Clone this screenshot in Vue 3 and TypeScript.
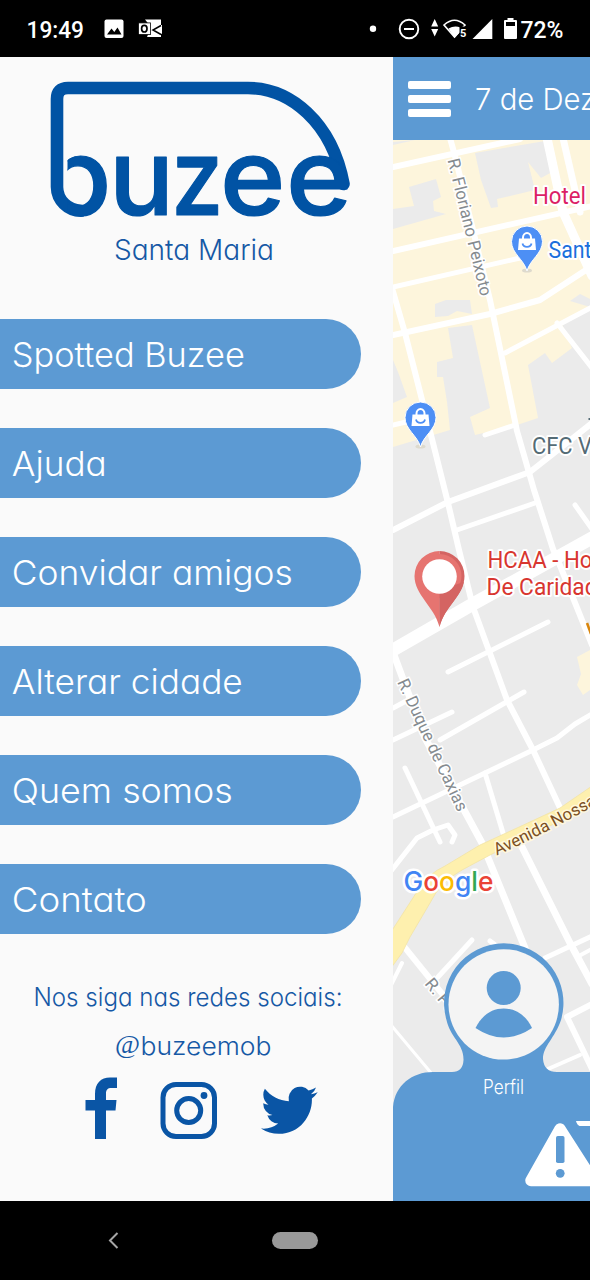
<script setup lang="ts">
interface MenuItem {
  label: string
  width: number
}

interface MapLabel {
  text: string
  x: number
  y: number
  width: number
  color: string
}

interface Road {
  points: string
  width: number
}

const menu: MenuItem[] = [
  { label: 'Spotted Buzee', width: 233 },
  { label: 'Ajuda', width: 95 },
  { label: 'Convidar amigos', width: 281 },
  { label: 'Alterar cidade', width: 231 },
  { label: 'Quem somos', width: 221 },
  { label: 'Contato', width: 135 },
]

const wordmark = [
  { letter: 'b', x: 42, stretch: 1.05 },
  { letter: 'u', x: 109, stretch: 1.01 },
  { letter: 'z', x: 171.3, stretch: 0.87 },
  { letter: 'e', x: 220, stretch: 1.04 },
  { letter: 'e', x: 286, stretch: 1.05 },
]

const blocks: string[] = [
  '393,140 590,140 590,309 562,324 572,348 552,363 545,353 528,365 538,418 517,425 475,435 470,417 490,408 472,325 448,328 453,358 437,362 437,377 443,377 447,402 450,430 393,447',
  '577,657 590,650 590,690 583,695 577,685 581,674',
]

const yards: string[] = [
  '475,153 545,141 552,172 541,178 528,162 535,190 497,199 498,207 491,208 481,180',
  '409,187 436,179 441,197 433,201 434,211 446,214 393,229 393,209 414,206',
  '435,304 446,300 470,300 472,314 457,311 448,316 435,317',
  '393,360 398,372 407,397 393,403',
  '393,142 415,140 393,145',
  '570,301 580,294 590,299 590,307',
]

const roads: Road[] = [
  { points: '393,167 520,139', width: 6 },
  { points: '450,138 455,156 490,300 517,431 534,490 553,549 561,568 592,645', width: 6 },
  { points: '547,138 563,212 592,276', width: 9 },
  { points: '563,138 580,212', width: 7 },
  { points: '393,251 592,206', width: 6 },
  { points: '393,287 520,258', width: 5 },
  { points: '392,288 405,333 433,443 448,503 459,550 473,607 507,700 533,750 562,812', width: 6 },
  { points: '393,335 490,314 540,300 592,266', width: 6 },
  { points: '505,353 592,307', width: 5 },
  { points: '557,323 592,368', width: 5 },
  { points: '485,435 515,425', width: 5 },
  { points: '393,530 448,502 530,472 592,423', width: 6 },
  { points: '457,530 535,503', width: 5 },
  { points: '393,425 410,421', width: 5 },
  { points: '575,505 592,529', width: 5 },
  { points: '388,653 473,604 592,538', width: 13 },
  { points: '448,672 548,622', width: 5 },
  { points: '440,740 524,692', width: 5 },
  { points: '393,740 452,712', width: 5 },
  { points: '393,708 408,700', width: 5 },
  { points: '394,655 425,738 482,843 525,948', width: 7 },
  { points: '393,817 485,773 533,750 557,738 575,724 592,714', width: 5 },
  { points: '405,768 440,842', width: 5 },
  { points: '391,871 417,838 433,830 448,825 455,835 452,842', width: 5 },
  { points: '485,773 503,833', width: 5 },
  { points: '522,847 570,943 592,984', width: 7 },
  { points: '545,958 592,936', width: 5 },
  { points: '577,957 592,949', width: 4 },
  { points: '472,940 438,977', width: 5 },
  { points: '402,944 452,1006', width: 6 },
  { points: '391,1025 432,1074', width: 3 },
  { points: '391,985 402,963', width: 4 },
  { points: '592,1004 567,1017 592,1069', width: 6 },
  { points: '548,1069 580,1055', width: 4 },
  { points: '490,941 502,950', width: 5 },
]

const places: MapLabel[] = [
  { text: 'Hotel', x: 533, y: 203.5, width: 53, color: '#dc1f66' },
  { text: 'Sant', x: 548.5, y: 258, width: 43, color: '#1b6fdc' },
  { text: 'CFC V', x: 532, y: 453.5, width: 60, color: '#546b75' },
  { text: 'HCAA - Ho', x: 487.5, y: 568, width: 105, color: '#d8362f' },
  { text: 'De Caridad', x: 486.5, y: 595, width: 111, color: '#d8362f' },
]

const shops = [
  { x: 527, y: 241.5 },
  { x: 420.5, y: 417.5 },
]

const google = [
  { letter: 'G', color: '#4285f4' },
  { letter: 'o', color: '#ea4335' },
  { letter: 'o', color: '#fbbc05' },
  { letter: 'g', color: '#4285f4' },
  { letter: 'l', color: '#34a853' },
  { letter: 'e', color: '#ea4335' },
]
</script>

<template>
  <div class="phone">
    <header class="status">
      <svg width="590" height="57" viewBox="0 0 590 57">
        <text class="status-text" x="26.5" y="37.5" textLength="57.5" lengthAdjust="spacingAndGlyphs">19:49</text>
        <rect x="104.5" y="19.5" width="19" height="18.5" rx="2" fill="#fff" />
        <path d="M107 34.5 L111.5 28.5 L114.3 32 L117.5 27.5 L121.5 34.5 Z" fill="#000" />
        <path d="M145 19.5 H161 V29 L151 27 Z M147 37 H161 V31 L150 30 Z" fill="#fff" />
        <path d="M150 26 L162 25 V34 L150 30 Z" fill="#fff" />
        <path d="M161 25.5 L153 30 L161 34.5" fill="none" stroke="#000" stroke-width="1.5" />
        <rect x="138.4" y="22.9" width="12" height="11.7" fill="#fff" stroke="#000" stroke-width="0.8" />
        <ellipse cx="144.3" cy="28.7" rx="2.7" ry="3.3" fill="none" stroke="#000" stroke-width="1.7" />
        <circle cx="373" cy="28.8" r="3.2" fill="#fff" />
        <circle cx="409" cy="29" r="9.3" fill="none" stroke="#fff" stroke-width="1.9" />
        <path d="M404 29 H414" stroke="#fff" stroke-width="2" />
        <path d="M431.2 26.5 L434.7 19 L438.2 26.5 Z M431.2 29 L434.7 36.5 L438.2 29 Z" fill="#fff" />
        <path d="M444 25 Q454.5 15.5 465 25 L454.5 37 Z" fill="none" stroke="#fff" stroke-width="1.6" />
        <path d="M448.5 28.5 Q454.5 25 460.5 27.5 V31.5 L454.5 38 Z" fill="#fff" />
        <rect x="459.5" y="26.5" width="8" height="11.5" fill="#000" />
        <text class="wifi-band" x="460" y="36.5">5</text>
        <path d="M472.5 39 L492.3 19 V39 Z" fill="#fff" />
        <path d="M507.5 18 H513.5 V20 H516 Q517 20 517 21 V38 Q517 39 516 39 H505 Q504 39 504 38 V21 Q504 20 505 20 H507.5 Z" fill="#fff" />
        <rect x="506" y="22" width="9" height="4" fill="#000" />
        <text class="status-text" x="520.5" y="37.5" textLength="43" lengthAdjust="spacingAndGlyphs">72%</text>
      </svg>
    </header>

    <div class="screen">
      <aside class="drawer">
        <svg class="brand" width="393" height="262" viewBox="0 57 393 262">
          <defs>
            <clipPath id="wordmark-edge">
              <path d="M67.5 150 H352 V220 H81 A30.3 30.3 0 0 1 67.5 214 Z" />
            </clipPath>
          </defs>
          <path
            d="M81 210.7 A24 24 0 0 1 57 187 V99 Q57 88 68 88 H248 C290 88 332 122 343.5 184"
            fill="none"
            stroke="#0153a4"
            stroke-width="12.6"
            stroke-linecap="round"
          />
          <g clip-path="url(#wordmark-edge)">
            <text
              v-for="glyph in wordmark"
              :key="glyph.x"
              class="wordmark"
              :transform="`translate(${glyph.x} 215) scale(${glyph.stretch} 1)`"
            >{{ glyph.letter }}</text>
          </g>
          <text class="thin city" x="114" y="260" textLength="160" lengthAdjust="spacingAndGlyphs">Santa Maria</text>
        </svg>

        <nav class="menu">
          <a v-for="item in menu" :key="item.label" class="item">
            <svg width="330" height="70" viewBox="0 0 330 70">
              <text class="thin item-text" x="11.8" y="48.2" :textLength="item.width" lengthAdjust="spacingAndGlyphs">{{ item.label }}</text>
            </svg>
          </a>
        </nav>

        <svg class="social" width="393" height="267" viewBox="0 934 393 267">
          <text class="thin follow" x="33.5" y="1006" textLength="309" lengthAdjust="spacingAndGlyphs">Nos siga nas redes sociais:</text>
          <text class="at" x="115" y="1053" textLength="25" lengthAdjust="spacingAndGlyphs">@</text>
          <text class="thin follow" x="140.5" y="1054.5" textLength="131" lengthAdjust="spacingAndGlyphs">buzeemob</text>
          <path
            d="M95 1139 V1110.5 H85.5 V1100 H95 V1094 C95 1083 101 1077.5 110 1077.5 H117 V1088 H111.5 C107.5 1088 106 1090 106 1093.5 V1100 H116.5 L115.5 1110.5 H106 V1139 Z"
            fill="#0a55a5"
          />
          <rect x="163" y="1084.5" width="51.5" height="52" rx="13" fill="none" stroke="#0a55a5" stroke-width="5" />
          <circle cx="188.7" cy="1110.6" r="12" fill="none" stroke="#0a55a5" stroke-width="5" />
          <circle cx="204" cy="1095.5" r="3.4" fill="#0a55a5" />
          <g transform="translate(261 1081.2) scale(2.362 2.42)">
            <path
              fill="#0a55a5"
              d="M23.953 4.57a10 10 0 01-2.825.775 4.958 4.958 0 002.163-2.723c-.951.555-2.005.959-3.127 1.184a4.92 4.92 0 00-8.384 4.482C7.69 8.095 4.067 6.13 1.64 3.162a4.822 4.822 0 00-.666 2.475c0 1.71.87 3.213 2.188 4.096a4.904 4.904 0 01-2.228-.616v.06a4.923 4.923 0 003.946 4.827 4.996 4.996 0 01-2.212.085 4.936 4.936 0 004.604 3.417 9.867 9.867 0 01-6.102 2.105c-.39 0-.779-.023-1.17-.067a13.995 13.995 0 007.557 2.209c9.053 0 13.998-7.496 13.998-13.985 0-.21 0-.42-.015-.63A9.935 9.935 0 0024 4.59z"
            />
          </g>
        </svg>
      </aside>

      <main class="content">
        <div class="topbar">
          <span class="burger"><i></i><i></i><i></i></span>
          <svg width="130" height="83" viewBox="0 0 130 83">
            <text class="thin date" x="-1" y="53" textLength="121" lengthAdjust="spacingAndGlyphs">7 de Dez</text>
          </svg>
        </div>

        <svg class="map" width="197" height="1061" viewBox="393 140 197 1061">
          <rect x="393" y="140" width="197" height="1061" fill="#ebebeb" />
          <polygon v-for="block in blocks" :key="block" :points="block" fill="#fdf5dc" />
          <polygon v-for="yard in yards" :key="yard" :points="yard" fill="#ebebeb" />
          <g fill="none" stroke="#fff" stroke-linecap="round" stroke-linejoin="round">
            <polyline v-for="road in roads" :key="road.points" :points="road.points" :stroke-width="road.width" />
          </g>
          <path
            d="M391 932 L420 887 Q428 874 445 866 L480 845 L517 828 L560 808 L592 786 V806 L560 821 L490 855 L462 870 Q440 882 430 903 L410 937 L402 953 L391 968 Z"
            fill="#fef0ae"
            stroke="#f3e3a4"
            stroke-width="0.8"
          />

          <g class="street">
            <text transform="translate(447.5 160) rotate(76.3)" textLength="141" lengthAdjust="spacingAndGlyphs">R. Floriano Peixoto</text>
            <text transform="translate(397 682) rotate(65)" textLength="144" lengthAdjust="spacingAndGlyphs">R. Duque de Caxias</text>
            <text transform="translate(424 984) rotate(50)" textLength="40" lengthAdjust="spacingAndGlyphs">R. Pa</text>
          </g>
          <path id="avenue" d="M497 855.5 Q545 834 610 797" fill="none" />
          <text class="avenue"><textPath href="#avenue">Avenida Nossa</textPath></text>
          <path d="M587 623 L591 634" stroke="#d9860d" stroke-width="2.5" />
          <path d="M588.5 418 H590 V420 H588.5 Z" fill="#546b75" />

          <text
            v-for="place in places"
            :key="place.text"
            class="place"
            :x="place.x"
            :y="place.y"
            :fill="place.color"
            :textLength="place.width"
            lengthAdjust="spacingAndGlyphs"
          >{{ place.text }}</text>

          <g v-for="shop in shops" :key="shop.x" :transform="`translate(${shop.x} ${shop.y})`">
            <ellipse cx="0" cy="29" rx="5" ry="2" fill="#dedacd" />
            <path
              d="M0 29.5 C-3 18 -15.5 12 -15.5 0 A15.5 15.5 0 0 1 15.5 0 C15.5 12 3 18 0 29.5 Z"
              fill="#4d8ff5"
              stroke="#fff"
              stroke-width="1"
            />
            <path d="M-8 -3 H8 L9 8.5 H-9 Z" fill="#fff" />
            <path d="M-4 -2 V-4 A4 4.5 0 0 1 4 -4 V-2" fill="none" stroke="#fff" stroke-width="2" />
            <path d="M-4.5 2 A4.6 4.2 0 0 0 4.5 2" fill="none" stroke="#4d8ff5" stroke-width="1.8" />
          </g>

          <path d="M439.5 627 C434 606 414.5 595 414.5 576 A25 25 0 0 1 439.5 551 Z" fill="#e67470" />
          <path d="M439.5 627 C445 606 464.5 595 464.5 576 A25 25 0 0 0 439.5 551 Z" fill="#d46462" />
          <circle cx="439.5" cy="576" r="22" fill="#e67470" />
          <path d="M439.5 627 C445 606 461 598 463.8 582 L439.5 590 Z" fill="#d46462" />
          <circle cx="439.5" cy="576.5" r="17.3" fill="#fff" />

          <text class="google" x="403.5" y="891" textLength="90" lengthAdjust="spacingAndGlyphs">
            <tspan v-for="(part, index) in google" :key="index" :fill="part.color">{{ part.letter }}</tspan>
          </text>

          <path
            d="M393 1201 V1107 C395 1085 412 1072 433 1072 H452 Q463 1072 463.5 1060 C464 1044 450 1037 446.5 1020 A59.7 59.7 0 1 1 561 1020 C555 1038 543 1046 543 1059 Q544 1072 557 1072 H590 V1201 Z"
            fill="#5c9ad3"
          />
          <circle cx="503.7" cy="1004.4" r="55.2" fill="#f4f4f4" />
          <circle cx="503.7" cy="988" r="17" fill="#5c9ad3" />
          <path
            d="M475.5 1028 C482 1015 492 1008.5 503.7 1008.5 C515.5 1008.5 526 1015 532 1028 Q503.7 1047 475.5 1028 Z"
            fill="#5c9ad3"
          />
          <text class="thin profile" x="483" y="1094.3" textLength="41" lengthAdjust="spacingAndGlyphs">Perfil</text>
          <path d="M560 1129 L593 1180.5 H531 Z" fill="#fff" stroke="#fff" stroke-width="11.5" stroke-linejoin="round" />
          <rect x="556" y="1136" width="8.5" height="27" rx="1.8" fill="#5c9ad3" />
          <circle cx="560.2" cy="1173.3" r="4.4" fill="#5c9ad3" />
          <path d="M576 1121 H590 V1126 H579.5 Q577 1125 576 1121 Z" fill="#fff" />
        </svg>
      </main>
    </div>

    <footer class="navbar">
      <svg width="590" height="79" viewBox="0 0 590 79">
        <path d="M117.5 32 L110 39.5 L117.5 47" fill="none" stroke="#a6a6a6" stroke-width="2" />
        <rect x="272" y="31" width="46" height="17" rx="8.5" fill="#999" />
      </svg>
    </footer>
  </div>
</template>

<style>
body {
  margin: 0;
  background: #000;
}
</style>

<style scoped>
.phone {
  display: flex;
  flex-direction: column;
  width: 590px;
  height: 1280px;
  overflow: hidden;
  background: #000;
  font-family: Inter, "Liberation Sans", sans-serif;
}

svg {
  display: block;
}

.status {
  height: 57px;
}

.status-text {
  font: 500 23px Roboto, sans-serif;
  fill: #fff;
}

.wifi-band {
  font: 700 11px Roboto, sans-serif;
  fill: #fff;
}

.screen {
  display: flex;
  height: 1144px;
}

.drawer {
  display: flex;
  flex-direction: column;
  width: 393px;
  background: #fafafa;
}

.wordmark {
  font: 500 107px Inter, sans-serif;
  fill: #0153a4;
  stroke: #0153a4;
  stroke-width: 1.2px;
  stroke-linejoin: round;
}

.thin {
  font-family: Inter, sans-serif;
  font-weight: 300;
  font-feature-settings: "cv11";
}

.city {
  font-size: 28px;
  fill: #1558a5;
}

.menu {
  display: flex;
  flex-direction: column;
  gap: 39px;
}

.item {
  width: 361.3px;
  height: 70px;
  border-radius: 0 35px 35px 0;
  background: #5c9ad3;
}

.item-text {
  font-size: 34.5px;
  fill: #fff;
}

.social {
  margin-top: auto;
}

.follow {
  font-size: 25.5px;
  fill: #1558a5;
}

.at {
  font: 25px "Liberation Serif", serif;
  fill: #1558a5;
}

.content {
  width: 197px;
  overflow: hidden;
}

.topbar {
  display: flex;
  align-items: center;
  gap: 24.5px;
  height: 83px;
  padding-left: 15px;
  overflow: hidden;
  background: #5c9ad3;
}

.topbar svg {
  flex: none;
}

.burger {
  display: flex;
  flex: none;
  flex-direction: column;
  gap: 6px;
  width: 43px;
}

.burger i {
  height: 8px;
  border-radius: 2px;
  background: #fff;
}

.date {
  font-size: 30px;
  fill: #fff;
}

.street text {
  font: 17px Roboto, sans-serif;
  fill: #858b8f;
  stroke: #fff;
  stroke-width: 3px;
  paint-order: stroke;
}

.avenue {
  font: 17px Roboto, sans-serif;
  fill: #7b4f23;
  stroke: #fff8dc;
  stroke-width: 3px;
  paint-order: stroke;
}

.place {
  font: 24px Roboto, sans-serif;
  stroke: #fff;
  stroke-width: 4px;
  stroke-linejoin: round;
  paint-order: stroke;
}

.google {
  font: 500 27px Inter, sans-serif;
  stroke: #fff;
  stroke-width: 5px;
  stroke-linejoin: round;
  paint-order: stroke;
}

.profile {
  font-size: 19.5px;
  fill: #fff;
}
</style>
